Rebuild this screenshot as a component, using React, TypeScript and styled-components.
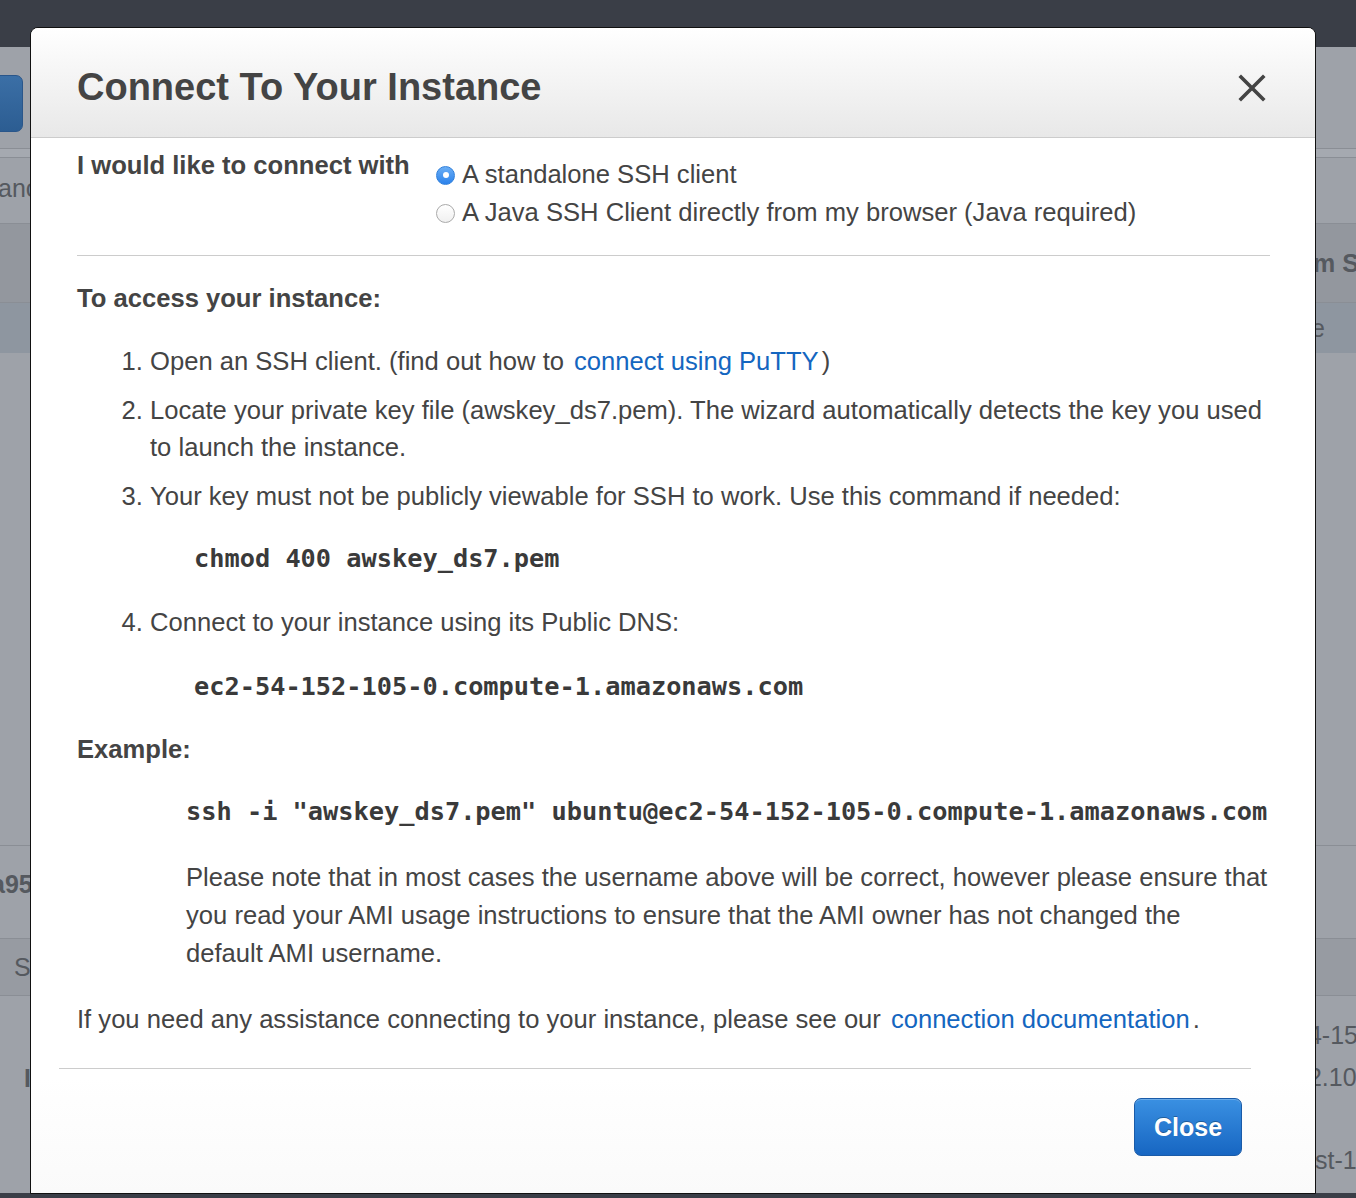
import styled, { createGlobalStyle } from "styled-components"

const GlobalStyle = createGlobalStyle`
  html, body {
    margin: 0;
    padding: 0;
    overflow: hidden;
  }
  body {
    font-family: "Liberation Sans", Arial, sans-serif;
    color: #444;
  }
`

const Page = styled.div`
  position: relative;
  width: 1356px;
  height: 1198px;
  overflow: hidden;
  background: #9ea2a9;
  display: flex;
  flex-direction: column;
`

const TopBar = styled.div`
  height: 47px;
  flex-shrink: 0;
  background: #3a3e47;
`

const BottomBar = styled.div`
  height: 5px;
  flex-shrink: 0;
  background: #3a3e47;
`

const BgRow = styled.div<{ $height: number; $bg?: string; $line?: boolean }>`
  height: ${(p) => p.$height}px;
  flex-shrink: 0;
  box-sizing: border-box;
  background: ${(p) => p.$bg ?? "#9ea2a9"};
  border-top: ${(p) => (p.$line ? "1px solid #8a8e95" : "none")};
  display: flex;
  justify-content: space-between;
  align-items: center;
  font-size: 25px;
  color: #55595f;
`

const BgLeft = styled.div<{ $bold?: boolean; $shift?: number; $dy?: number }>`
  margin-left: ${(p) => p.$shift ?? 0}px;
  margin-bottom: ${(p) => (p.$dy ? p.$dy * 2 : 0)}px;
  font-weight: ${(p) => (p.$bold ? 700 : 400)};
  white-space: nowrap;
`

const BgRight = styled.div<{ $bold?: boolean; $inset: number }>`
  width: 62px;
  box-sizing: border-box;
  padding-left: ${(p) => p.$inset}px;
  font-weight: ${(p) => (p.$bold ? 700 : 400)};
  white-space: nowrap;
  overflow: hidden;
`

const BgStack = styled.div`
  align-self: stretch;
  width: 62px;
  display: flex;
  flex-direction: column;
  padding-top: 25px;
  gap: 13px;
  white-space: nowrap;
`

const BgStackItem = styled.span<{ $inset?: number; $top?: number }>`
  padding-left: ${(p) => p.$inset ?? 0}px;
  margin-top: ${(p) => p.$top ?? 0}px;
`

const LaunchButton = styled.div`
  width: 62px;
  height: 57px;
  margin-left: -39px;
  margin-top: 12px;
  border-radius: 7px;
  background: linear-gradient(#3b6fa6, #2c5d92);
  border: 1px solid #2a568a;
  color: #fff;
  font-weight: 700;
  font-size: 25px;
  display: flex;
  align-items: center;
  justify-content: flex-end;
  padding-right: 36px;
  box-sizing: border-box;
`

const Modal = styled.div`
  position: absolute;
  top: 27px;
  left: 30px;
  width: 1286px;
  height: 1167px;
  box-sizing: border-box;
  background: linear-gradient(#fff 90%, #fafafa);
  border: 1px solid #111;
  border-radius: 8px 8px 0 0;
  display: flex;
  flex-direction: column;
  overflow: hidden;
`

const Header = styled.div`
  height: 110px;
  box-sizing: border-box;
  flex-shrink: 0;
  padding: 0 46px;
  background: linear-gradient(#ffffff, #e8e8e8);
  border-bottom: 1px solid #cccccc;
  display: flex;
  align-items: center;
  justify-content: space-between;
`

const Title = styled.h1`
  margin: 0;
  font-size: 38px;
  font-weight: 700;
  color: #444;
  padding-top: 10px;
`

const CloseIcon = styled.button`
  border: none;
  background: none;
  padding: 0;
  margin-right: 3px;
  margin-top: 10px;
  width: 28px;
  height: 28px;
  display: flex;
  cursor: pointer;
`

const Body = styled.div`
  padding: 12px 45px 0 46px;
  font-size: 25.6px;
  line-height: 37.5px;
`

const ConnectRow = styled.div`
  display: grid;
  grid-template-columns: 359px 1fr;
  align-items: start;
`

const Label = styled.div`
  font-weight: 700;
  line-height: 30px;
`

const Options = styled.div`
  padding-top: 5px;
  line-height: 38px;
`

const Option = styled.label`
  display: flex;
  align-items: center;
  gap: 7px;
`

const Radio = styled.span<{ $checked?: boolean }>`
  width: 19px;
  height: 19px;
  border-radius: 50%;
  box-sizing: border-box;
  flex-shrink: 0;
  margin-top: 2px;
  display: flex;
  align-items: center;
  justify-content: center;
  background: ${(p) => (p.$checked ? "linear-gradient(#6aaef5, #2b82ec)" : "linear-gradient(#fff, #f0f0f0)")};
  border: 1px solid ${(p) => (p.$checked ? "#2f7fdb" : "#aaa")};

  &::after {
    content: "";
    display: ${(p) => (p.$checked ? "block" : "none")};
    width: 6px;
    height: 6px;
    border-radius: 50%;
    background: #fff;
  }
`

const Divider = styled.hr`
  border: none;
  border-top: 1px solid #cccccc;
  margin: 24px 0 0;
`

const SectionTitle = styled.div<{ $top: number }>`
  font-weight: 700;
  line-height: 30px;
  margin-top: ${(p) => p.$top}px;
`

const Steps = styled.ol`
  margin: 30px 0 0;
  padding-left: 73px;
`

const Step = styled.li`
  margin-bottom: 11px;
`

const Link = styled.a`
  color: #1466c0;
  text-decoration: none;
  margin-left: 10px;
  margin-right: 3px;
`

const Code = styled.div<{ $indent: number; $top: number; $bottom?: number }>`
  font-family: "DejaVu Sans Mono", "Liberation Mono", monospace;
  font-weight: 700;
  font-size: 25.3px;
  line-height: 37px;
  color: #3a3a3a;
  white-space: pre;
  margin: ${(p) => p.$top}px 0 ${(p) => p.$bottom ?? 0}px ${(p) => p.$indent}px;
`

const Note = styled.p`
  margin: 28px -4px 0 109px;
  line-height: 38px;
`

const Paragraph = styled.p`
  margin: 29px 0 0;
`

const FooterDivider = styled.hr`
  border: none;
  border-top: 1px solid #cccccc;
  margin: 30px 64px 0 28px;
`

const Footer = styled.div`
  display: flex;
  justify-content: flex-end;
  padding: 29px 73px 0 0;
`

const PrimaryButton = styled.button`
  width: 108px;
  height: 58px;
  border-radius: 7px;
  border: 1px solid #1a5ba8;
  background: linear-gradient(#3a90e2, #1766c2);
  color: #fff;
  font-family: "Liberation Sans", Arial, sans-serif;
  font-weight: 700;
  font-size: 25px;
  text-shadow: 0 -1px 0 rgba(0, 0, 0, 0.3);
  box-shadow: inset 0 1px 0 rgba(255, 255, 255, 0.25);
  cursor: pointer;
`

export default function App() {
  return (
    <>
      <GlobalStyle />
      <Page>
        <TopBar />
        <BgRow $height={101}>
          <LaunchButton>e</LaunchButton>
        </BgRow>
        <BgRow $height={9} $bg="#a5a9b0" $line />
        <BgRow $height={66} $line>
          <BgLeft $shift={-2} $dy={2}>anc</BgLeft>
        </BgRow>
        <BgRow $height={79} $bg="#93979e" $line>
          <span />
          <BgRight $bold $inset={19}>m S</BgRight>
        </BgRow>
        <BgRow $height={51} $bg="#8e96a0" $line>
          <span />
          <BgRight $inset={17}>e</BgRight>
        </BgRow>
        <BgRow $height={492} />
        <BgRow $height={93} $line>
          <BgLeft $bold $shift={-9} $dy={8}>a95</BgLeft>
        </BgRow>
        <BgRow $height={57} $bg="#979ba2" $line>
          <BgLeft $shift={14}>S</BgLeft>
        </BgRow>
        <BgRow $height={198} $line>
          <BgLeft $bold $shift={24} $dy={16}>I</BgLeft>
          <BgStack>
            <BgStackItem>44-15</BgStackItem>
            <BgStackItem>12.10</BgStackItem>
            <BgStackItem $inset={21} $top={41}>
              st-1
            </BgStackItem>
          </BgStack>
        </BgRow>
        <BottomBar />

        <Modal>
          <Header>
            <Title>Connect To Your Instance</Title>
            <CloseIcon aria-label="Close">
              <svg width="28" height="28" viewBox="0 0 28 28">
                <path d="M3 3 L25 25 M25 3 L3 25" stroke="#444" strokeWidth="3.6" strokeLinecap="square" />
              </svg>
            </CloseIcon>
          </Header>
          <Body>
            <ConnectRow>
              <Label>I would like to connect with</Label>
              <Options>
                <Option>
                  <Radio $checked />A standalone SSH client
                </Option>
                <Option>
                  <Radio />A Java SSH Client directly from my browser (Java required)
                </Option>
              </Options>
            </ConnectRow>
            <Divider />
            <SectionTitle $top={27}>To access your instance:</SectionTitle>
            <Steps>
              <Step>
                Open an SSH client. (find out how to<Link href="#">connect using PuTTY</Link>)
              </Step>
              <Step>
                Locate your private key file (awskey_ds7.pem). The wizard automatically detects the key you used to
                launch the instance.
              </Step>
              <Step>
                Your key must not be publicly viewable for SSH to work. Use this command if needed:
                <Code $indent={44} $top={25} $bottom={27}>
                  chmod 400 awskey_ds7.pem
                </Code>
              </Step>
              <Step>
                Connect to your instance using its Public DNS:
                <Code $indent={44} $top={26}>
                  ec2-54-152-105-0.compute-1.amazonaws.com
                </Code>
              </Step>
            </Steps>
            <SectionTitle $top={29}>Example:</SectionTitle>
            <Code $indent={109} $top={29}>
              ssh -i "awskey_ds7.pem" ubuntu@ec2-54-152-105-0.compute-1.amazonaws.com
            </Code>
            <Note>
              Please note that in most cases the username above will be correct, however please ensure that you read
              your AMI usage instructions to ensure that the AMI owner has not changed the
              <br />
              default AMI username.
            </Note>
            <Paragraph>
              If you need any assistance connecting to your instance, please see our
              <Link href="#">connection documentation</Link>.
            </Paragraph>
          </Body>
          <FooterDivider />
          <Footer>
            <PrimaryButton>Close</PrimaryButton>
          </Footer>
        </Modal>
      </Page>
    </>
  )
}
